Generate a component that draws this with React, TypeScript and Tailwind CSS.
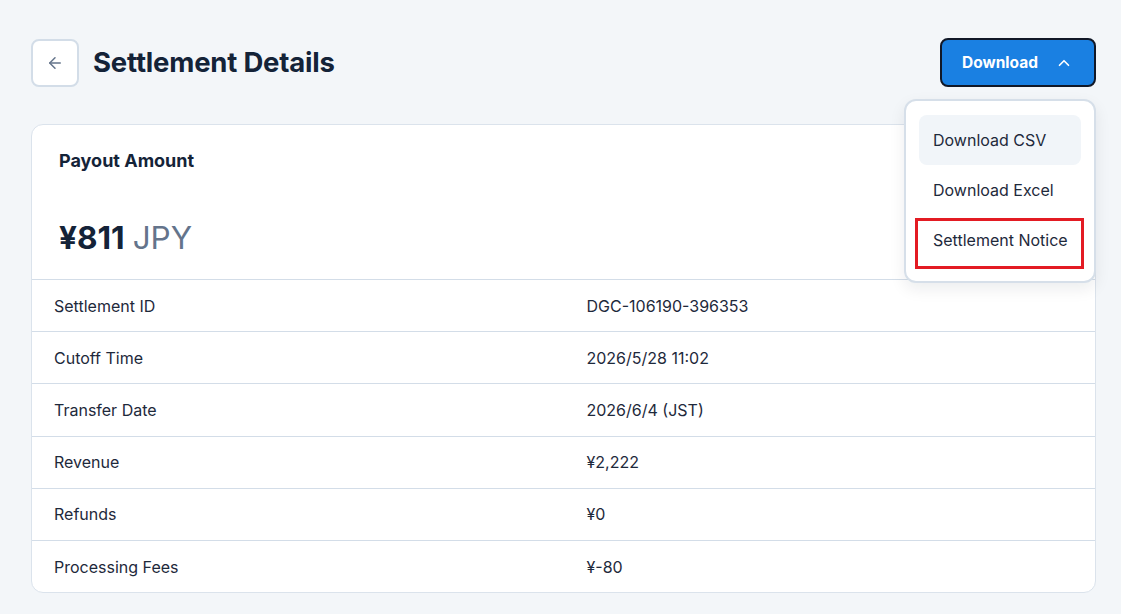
import React from "react";

const rows: [string, string][] = [
  ["Settlement ID", "DGC-106190-396353"],
  ["Cutoff Time", "2026/5/28 11:02"],
  ["Transfer Date", "2026/6/4 (JST)"],
  ["Revenue", "¥2,222"],
  ["Refunds", "¥0"],
  ["Processing Fees", "¥-80"],
];

function ArrowLeft() {
  return (
    <svg width="18" height="18" viewBox="0 0 24 24" fill="none" stroke="#64748b" strokeWidth="2" strokeLinecap="round" strokeLinejoin="round">
      <path d="M19 12H5" />
      <path d="M12 19l-7-7 7-7" />
    </svg>
  );
}

function ChevronUp() {
  return (
    <svg width="18" height="18" viewBox="0 0 24 24" fill="none" stroke="#ffffff" strokeWidth="2.2" strokeLinecap="round" strokeLinejoin="round">
      <path d="M6 15l6-6 6 6" />
    </svg>
  );
}

export default function App() {
  return (
    <div
      className="min-h-[614px] bg-[#f3f6f9] pl-[31px] pr-[25px] pt-[38px] text-[#1e293b]"
      style={{ fontFamily: "Inter, 'Noto Sans', sans-serif" }}
    >
      <div className="flex items-center justify-between">
        <div className="flex items-center gap-[14px]">
          <button className="flex h-[48px] w-[48px] items-center justify-center rounded-[8px] border-2 border-[#d3dde8] bg-white">
            <ArrowLeft />
          </button>
          <h1 className="text-[27.5px] font-bold leading-none tracking-[-0.2px] text-[#142338]">Settlement Details</h1>
        </div>
        <div className="relative">
          <button className="flex h-[49px] w-[156px] items-center justify-between rounded-[8px] border-2 border-[#111827] bg-[#1a80e2] pl-[20px] pr-[21px] text-[15.5px] font-bold text-white">
            <span>Download</span>
            <ChevronUp />
          </button>
          <div className="absolute right-0 top-[61px] z-10 w-[192px] rounded-[12px] border-2 border-[#d6dfe9] bg-white px-[13px] pb-[16px] pt-[14px] shadow-[0_6px_16px_rgba(15,23,42,0.08)]">
            <div className="flex h-[50px] items-center whitespace-nowrap rounded-[8px] bg-[#f1f5f9] px-[14px] text-[16px] text-[#1e293b]">Download CSV</div>
            <div className="flex h-[50px] items-center whitespace-nowrap rounded-[8px] px-[14px] text-[16px] text-[#1e293b]">Download Excel</div>
            <div className="relative flex h-[50px] items-center whitespace-nowrap rounded-[8px] px-[14px] text-[16px] text-[#1e293b]">
              Settlement Notice
              <span className="pointer-events-none absolute left-[-4px] right-[-3px] top-[3px] h-[51px] border-[3px] border-[#e31b23]" />
            </div>
          </div>
        </div>
      </div>

      <div className="mt-[37px] overflow-hidden rounded-[12px] border border-[#dbe3ec] bg-white">
        <div className="h-[154px] px-[27px] pt-[22px]">
          <div className="text-[18px] font-bold text-[#142338]">Payout Amount</div>
          <div className="mt-[48px] flex items-baseline gap-[8px] leading-none">
            <span className="text-[31.5px] font-bold text-[#142338]">¥811</span>
            <span className="text-[31.5px] text-[#64748b]">JPY</span>
          </div>
        </div>
        {rows.map(([label, value]) => (
          <div key={label} className="grid h-[52.2px] grid-cols-2 items-center border-t border-[#d3dde8] text-[16px] text-[#1e293b]">
            <div className="px-[22px]">{label}</div>
            <div className="px-[23px]">{value}</div>
          </div>
        ))}
      </div>
    </div>
  );
}
